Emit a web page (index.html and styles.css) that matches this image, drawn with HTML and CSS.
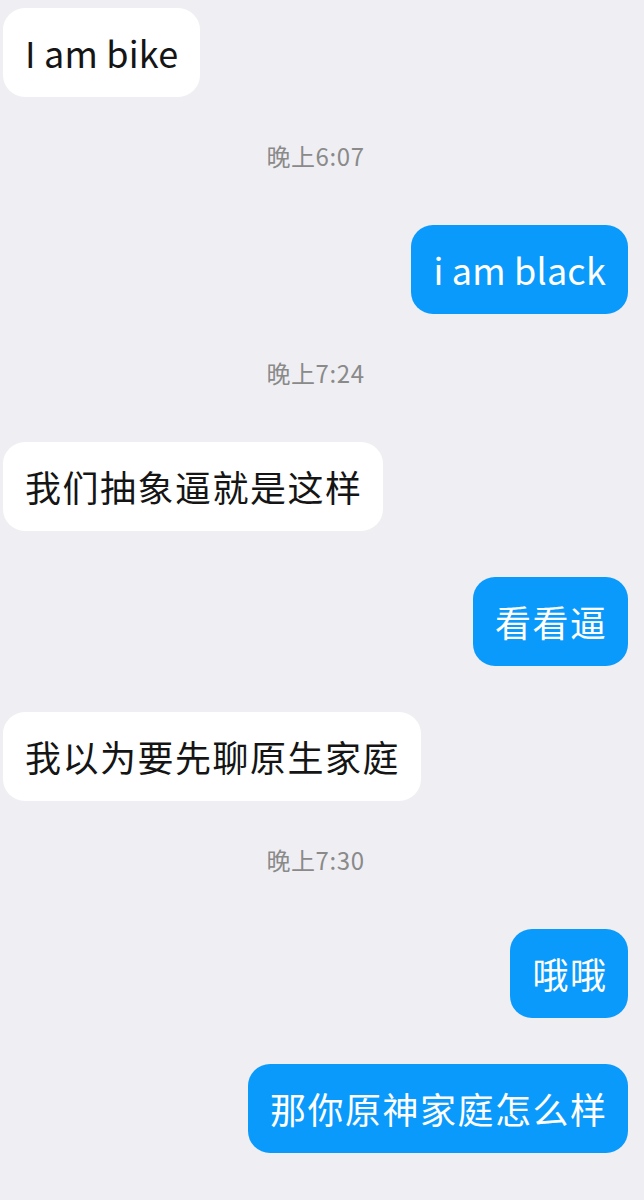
FILE: index.html
```html
<!DOCTYPE html>
<html lang="zh">
<head>
    <meta charset="UTF-8">
    <meta name="viewport" content="width=device-width, initial-scale=1.0">
    <title>Chat</title>
    <link rel="stylesheet" href="styles.css">
</head>
<body>
    <div class="chat">
        <div class="row left"><div class="bubble">I am bike</div></div>
        <div class="time">晚上6:07</div>
        <div class="row right"><div class="bubble">i am black</div></div>
        <div class="time">晚上7:24</div>
        <div class="row left"><div class="bubble zh">我们抽象逼就是这样</div></div>
        <div class="row right"><div class="bubble zh">看看逼</div></div>
        <div class="row left"><div class="bubble zh">我以为要先聊原生家庭</div></div>
        <div class="time">晚上7:30</div>
        <div class="row right"><div class="bubble zh">哦哦</div></div>
        <div class="row right"><div class="bubble zh">那你原神家庭怎么样</div></div>
    </div>
</body>
</html>
```

FILE: styles.css
```css
html, body {
    margin: 0;
    background-color: #efeff3;
}
body {
    font-family: "Noto Sans CJK SC", "Noto Sans", sans-serif;
}
.chat {
    display: flex;
    flex-direction: column;
    gap: 46px;
    padding: 8px 16px 40px 3px;
}
.row {
    display: flex;
}
.row.left {
    justify-content: flex-start;
}
.row.right {
    justify-content: flex-end;
}
.bubble {
    font-size: 36px;
    line-height: 47px;
    padding: 21px 22px;
    border-radius: 22px;
    background-color: white;
    color: #151515;
    letter-spacing: 0.2px;
}
.bubble.zh {
    letter-spacing: 1.5px;
    padding-right: 20.5px;
}
.right .bubble {
    background-color: #0a9afc;
    color: white;
}
.time {
    text-align: center;
    font-size: 24px;
    line-height: 30px;
    letter-spacing: 0.6px;
    color: #8a8a8a;
    margin: -2px 0 8px;
}
```
